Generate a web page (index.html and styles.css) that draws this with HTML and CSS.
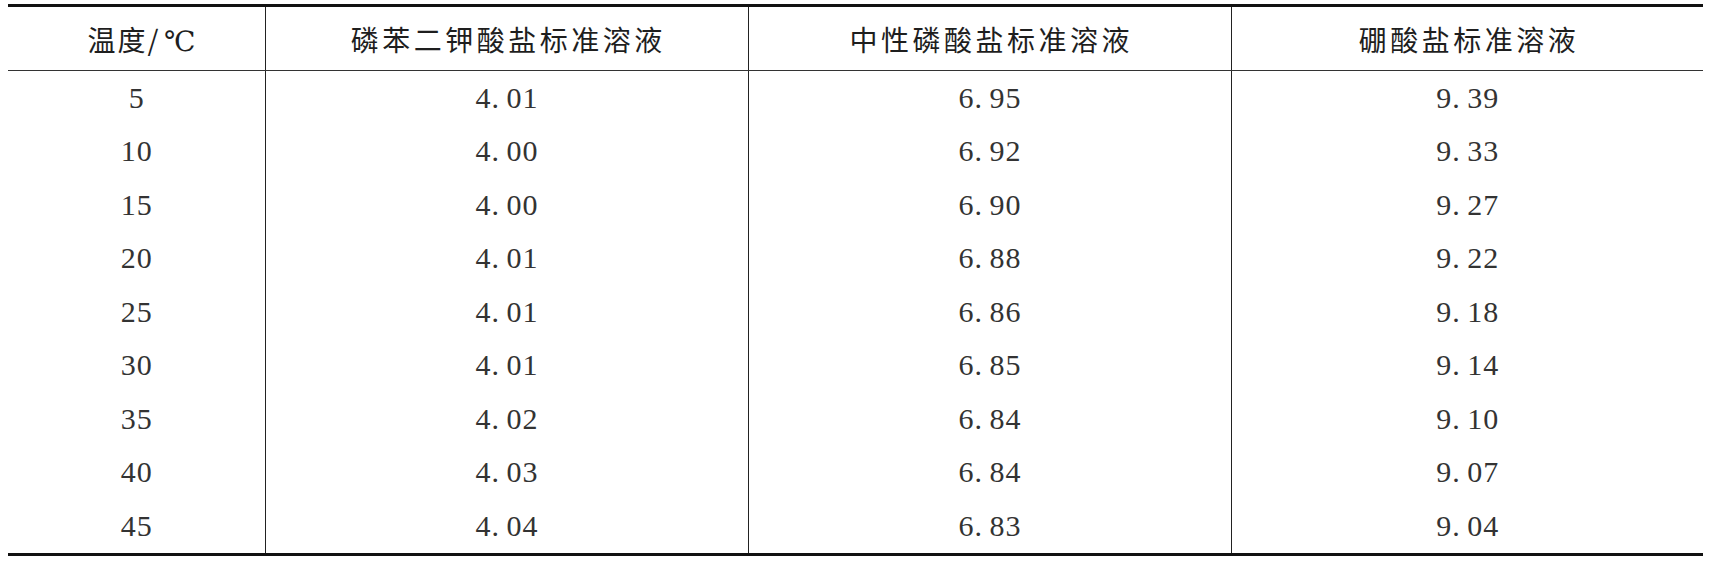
FILE: index.html
```html
<!DOCTYPE html>
<html lang="zh">
<head>
<meta charset="utf-8">
<title>pH标准溶液</title>
<link rel="stylesheet" href="styles.css">
</head>
<body>
<table class="ph">
  <colgroup>
    <col class="c1"><col class="c2"><col class="c3"><col class="c4">
  </colgroup>
  <thead>
    <tr>
      <th class="temp">温度/<span class="deg">℃</span></th>
      <th>磷苯二钾酸盐标准溶液</th>
      <th>中性磷酸盐标准溶液</th>
      <th>硼酸盐标准溶液</th>
    </tr>
  </thead>
  <tbody>
    <tr><td>5</td><td>4<span class="dot">.</span>01</td><td>6<span class="dot">.</span>95</td><td>9<span class="dot">.</span>39</td></tr>
    <tr><td>10</td><td>4<span class="dot">.</span>00</td><td>6<span class="dot">.</span>92</td><td>9<span class="dot">.</span>33</td></tr>
    <tr><td>15</td><td>4<span class="dot">.</span>00</td><td>6<span class="dot">.</span>90</td><td>9<span class="dot">.</span>27</td></tr>
    <tr><td>20</td><td>4<span class="dot">.</span>01</td><td>6<span class="dot">.</span>88</td><td>9<span class="dot">.</span>22</td></tr>
    <tr><td>25</td><td>4<span class="dot">.</span>01</td><td>6<span class="dot">.</span>86</td><td>9<span class="dot">.</span>18</td></tr>
    <tr><td>30</td><td>4<span class="dot">.</span>01</td><td>6<span class="dot">.</span>85</td><td>9<span class="dot">.</span>14</td></tr>
    <tr><td>35</td><td>4<span class="dot">.</span>02</td><td>6<span class="dot">.</span>84</td><td>9<span class="dot">.</span>10</td></tr>
    <tr><td>40</td><td>4<span class="dot">.</span>03</td><td>6<span class="dot">.</span>84</td><td>9<span class="dot">.</span>07</td></tr>
    <tr><td>45</td><td>4<span class="dot">.</span>04</td><td>6<span class="dot">.</span>83</td><td>9<span class="dot">.</span>04</td></tr>
  </tbody>
</table>
</body>
</html>
```

FILE: styles.css
```css
html, body {
  margin: 0;
  padding: 0;
  background: #ffffff;
}

body {
  padding: 4px 0 0 8px;
}

.ph {
  border-collapse: collapse;
  table-layout: fixed;
  width: 1695px;
  border-top: 3px solid #111;
  border-bottom: 3px solid #111;
  font-family: "Liberation Serif", "Noto Sans CJK SC", serif;
  color: #333;
}

.c1 { width: 257px; }
.c2 { width: 483px; }
.c3 { width: 483px; }
.c4 { width: 472px; }

.ph th,
.ph td {
  padding: 0;
  text-align: center;
  vertical-align: middle;
  border-left: 1px solid #222;
}

.ph th:first-child,
.ph td:first-child {
  border-left: none;
}

.ph th {
  height: 63px;
  font-weight: 400;
  font-size: 28px;
  letter-spacing: 3.5px;
  text-indent: 3.5px;
  color: #1e1e1e;
  border-bottom: 1px solid #333;
}

.ph th.temp {
  font-family: "Noto Sans CJK SC", sans-serif;
  letter-spacing: 2px;
}

.deg {
  display: inline-block;
  width: 1em;
  text-align: right;
  font-family: "Liberation Serif", "DejaVu Serif", serif;
  letter-spacing: 0;
}

.ph td {
  height: 53.5px;
  font-size: 30px;
  line-height: 1;
  letter-spacing: 1px;
  text-indent: 1px;
}

.dot {
  display: inline-block;
  width: 0.5em;
  text-align: left;
  text-indent: 0;
}
```
